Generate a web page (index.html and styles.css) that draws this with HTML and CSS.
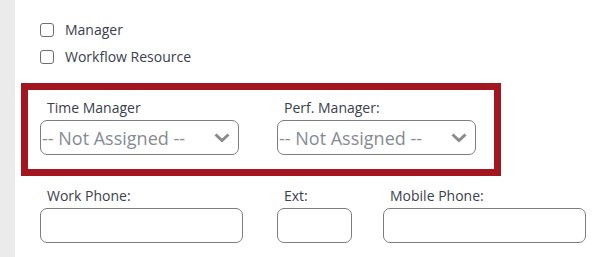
FILE: index.html
```html
<!DOCTYPE html>
<html lang="en">
<head>
  <meta charset="UTF-8">
  <meta name="viewport" content="width=device-width, initial-scale=1.0">
  <title>User Details</title>
  <link rel="stylesheet" href="styles.css">
</head>
<body>
  <div class="sidebar"></div>
  <div class="main">
    <div class="checks">
      <label class="check-row"><input type="checkbox"> Manager</label>
      <label class="check-row"><input type="checkbox"> Workflow Resource</label>
    </div>

    <div class="highlight">
      <div class="field">
        <div class="field-label">Time Manager</div>
        <div class="select-box">
          <span>-- Not Assigned --</span>
          <svg class="chevron" width="16" height="10" viewBox="0 0 16 10"><polyline points="1.5,1.5 8,7.5 14.5,1.5" fill="none" stroke="#8a8a8a" stroke-width="3"/></svg>
        </div>
      </div>
      <div class="field">
        <div class="field-label">Perf. Manager:</div>
        <div class="select-box">
          <span>-- Not Assigned --</span>
          <svg class="chevron" width="16" height="10" viewBox="0 0 16 10"><polyline points="1.5,1.5 8,7.5 14.5,1.5" fill="none" stroke="#8a8a8a" stroke-width="3"/></svg>
        </div>
      </div>
    </div>

    <div class="phones">
      <div class="field work">
        <div class="field-label">Work Phone:</div>
        <input class="text-input" type="text">
      </div>
      <div class="field ext">
        <div class="field-label">Ext:</div>
        <input class="text-input" type="text">
      </div>
      <div class="field mobile">
        <div class="field-label">Mobile Phone:</div>
        <input class="text-input" type="text">
      </div>
    </div>
  </div>
</body>
</html>
```

FILE: styles.css
```css
body {
  margin: 0;
  font-family: 'Open Sans', 'Liberation Sans', sans-serif;
  font-size: 14px;
  color: #3a404c;
  background-color: #ffffff;
  display: flex;
  height: 100vh;
  overflow: hidden;
}
.sidebar {
  width: 15px;
  flex-shrink: 0;
  background-color: #ebebeb;
}
.main {
  flex: 1;
  padding-top: 16px;
}
.checks {
  padding-left: 25px;
}
.check-row {
  display: flex;
  align-items: center;
  height: 27px;
  line-height: 19px;
}
.check-row input {
  appearance: none;
  -webkit-appearance: none;
  width: 14px;
  height: 14px;
  margin: 0 11px 0 0;
  border: 1px solid #6e6e6e;
  border-radius: 3px;
  background-color: #ffffff;
  box-sizing: border-box;
}
.highlight {
  margin: 13px 0 0 6px;
  width: 480px;
  height: 93px;
  box-sizing: border-box;
  border: 7px solid #a3161f;
  padding: 8px 0 0 12px;
  display: flex;
  gap: 38px;
}
.field-label {
  line-height: 19px;
  padding-left: 7px;
}
.highlight .field {
  width: 199px;
}
.highlight .field-label {
  margin-bottom: 3px;
}
.select-box {
  height: 35px;
  box-sizing: border-box;
  border: 1px solid #7d7d7d;
  border-radius: 7px;
  display: flex;
  align-items: center;
  justify-content: space-between;
  padding: 0 8px 0 1px;
  font-size: 18px;
  color: #868b93;
}
.chevron {
  display: block;
}
.phones {
  display: flex;
  padding: 10px 0 0 25px;
}
.phones .field-label {
  margin-bottom: 3px;
}
.field.work {
  width: 203px;
}
.field.ext {
  width: 75px;
  margin-left: 34px;
}
.field.mobile {
  width: 203px;
  margin-left: 31px;
}
.text-input {
  display: block;
  width: 100%;
  height: 35px;
  box-sizing: border-box;
  border: 1px solid #7d7d7d;
  border-radius: 7px;
  margin: 0;
  padding: 0 8px;
  font-family: inherit;
  font-size: 14px;
}
```
